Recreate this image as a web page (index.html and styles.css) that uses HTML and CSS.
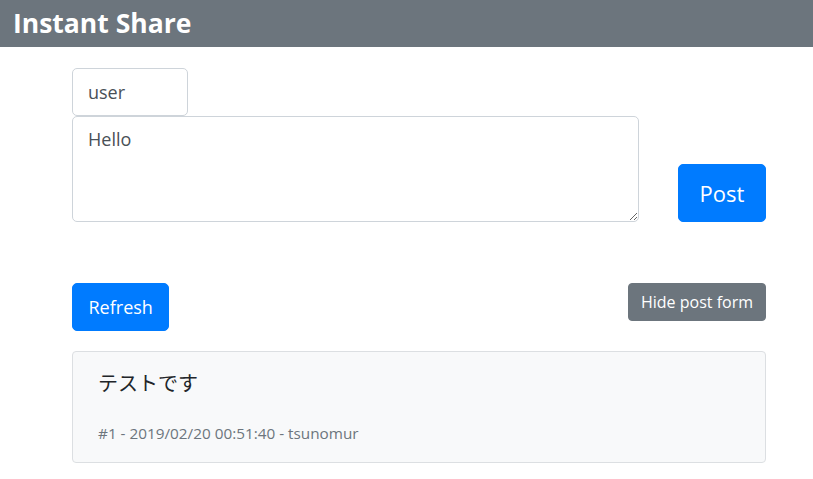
FILE: index.html
```html
<!DOCTYPE html>
<html lang="ja">
<head>
<meta charset="utf-8">
<title>Instant Share</title>
<link rel="stylesheet" href="styles.css">
</head>
<body>
<header class="topbar"><h1 class="brand">Instant Share</h1></header>
<main class="container">
  <section class="post-form">
    <div class="fields">
      <input class="field field-user" type="text" value="user">
      <textarea class="field field-text">Hello</textarea>
    </div>
    <button class="btn btn-primary btn-post">Post</button>
  </section>
  <section class="toolbar">
    <button class="btn btn-primary btn-lg">Refresh</button>
    <button class="btn btn-secondary">Hide post form</button>
  </section>
  <article class="card">
    <p class="card-text">テストです</p>
    <p class="card-meta">#1 - 2019/02/20 00:51:40 - tsunomur</p>
  </article>
</main>
</body>
</html>
```
FILE: styles.css
```css
* { box-sizing: border-box; }
body {
  margin: 0;
  font-family: "Open Sans", "Noto Sans CJK JP", sans-serif;
  color: #212529;
  background: #fff;
}
.topbar {
  background: #6c757d;
  height: 47px;
  padding: 0 13px;
  display: flex;
  align-items: center;
}
.brand {
  margin: 0;
  color: #fff;
  font-size: 26.5px;
  font-weight: 700;
  line-height: 1;
}
.container {
  padding: 21px 47px 0 72px;
}
.post-form {
  display: flex;
  align-items: flex-end;
  gap: 39px;
}
.fields {
  display: flex;
  flex-direction: column;
  width: 567px;
}
.field {
  font-family: inherit;
  font-size: 18px;
  color: #495057;
  border: 1px solid #ced4da;
  border-radius: 5px;
  background: #fff;
  padding: 8px 15px;
  line-height: 1.5;
}
.field-user { width: 116px; height: 48px; }
.field-text { height: 106px; resize: vertical; padding-top: 9px; }
.btn {
  font-family: inherit;
  border: 1px solid transparent;
  border-radius: 4px;
  color: #fff;
  font-size: 16px;
  line-height: 1.5;
  padding: 6px 12px;
  cursor: pointer;
}
.btn-primary { background: #007bff; border-color: #007bff; }
.btn-secondary { background: #6c757d; border-color: #6c757d; height: 38px; }
.btn-lg { font-size: 18px; padding: 0 15.5px; height: 48px; border-radius: 5px; }
.btn-post { width: 88px; height: 58px; font-size: 22px; padding: 0; border-radius: 5px; }
.toolbar {
  display: flex;
  justify-content: space-between;
  align-items: flex-start;
  margin-top: 61px;
}
.card {
  margin-top: 20px;
  background: #f8f9fa;
  border: 1px solid #dcdfe2;
  border-radius: 4px;
  padding: 18px 25px 17px;
  height: 112px;
}
.card-text { margin: 0; font-size: 20px; line-height: 1.4; color: #212529; }
.card-meta { margin: 25px 0 0; font-size: 15.3px; color: #6c757d; }
```
